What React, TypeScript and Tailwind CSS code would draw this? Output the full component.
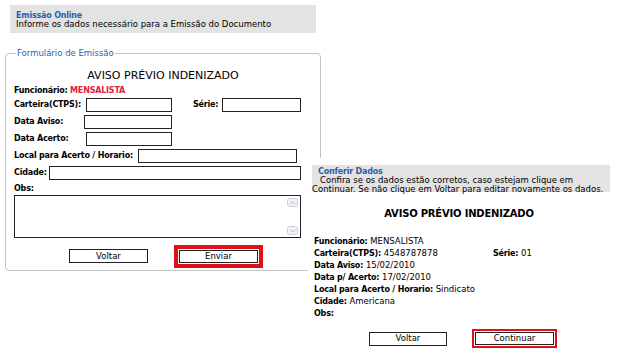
import React from 'react';

const font = 'font-["DejaVu_Sans",Verdana,sans-serif]';
const bold = 'font-bold text-[8px] tracking-[-0.2px] whitespace-nowrap';

const Input = ({ w }: { w: string }) => (
  <span className={`block h-[14px] ${w} border border-[#222] bg-white`} />
);

const Btn = ({ label, w, h }: { label: string; w: string; h: string }) => (
  <button className={`flex ${w} ${h} items-center justify-center border border-[#222] bg-white text-[8.5px] leading-none text-black`}>
    {label}
  </button>
);

const FormRow = ({ label, labelW, input }: { label: string; labelW: string; input: string }) => (
  <div className="flex h-[17px] items-center">
    <span className={`${labelW} shrink-0 ${bold}`}>{label}</span>
    <Input w={input} />
  </div>
);

const Emissao = () => (
  <div className="w-[330px]">
    <div className="ml-[10px] mt-[5px] h-[28px] w-[306px] bg-[#e3e3e3] px-[6px] pt-[6px] leading-[9px]">
      <div className="text-[8px] font-bold tracking-[-0.2px] text-[#2a5fae]">Emissão Online</div>
      <div className="text-[8.5px] text-black">Informe os dados necessário para a Emissão do Documento</div>
    </div>
    <fieldset className="ml-[5px] mt-[14px] h-[224px] w-[316px] rounded-[4px] border border-[#c4c4c4] pl-[8px] pr-[18px]">
      <legend className="ml-[2px] px-[1px] text-[8.5px] text-[#2a5fae]">Formulário de Emissão</legend>
      <div className="mt-[9px] pl-[10px] text-center text-[11px] leading-[14px]">AVISO PRÉVIO INDENIZADO</div>
      <div className={`mt-[1px] h-[13px] leading-[13px] ${bold}`}>
        Funcionário: <span className="text-[#e3203b]">MENSALISTA</span>
      </div>
      <div className="flex h-[17px] items-center">
        <span className={`w-[72px] shrink-0 ${bold}`}>Carteira(CTPS):</span>
        <Input w="w-[86px]" />
        <span className={`ml-[21px] w-[29px] shrink-0 ${bold}`}>Série:</span>
        <Input w="w-[79px]" />
      </div>
      <FormRow label="Data Aviso:" labelW="w-[70px]" input="w-[88px]" />
      <FormRow label="Data Acerto:" labelW="w-[72px]" input="w-[86px]" />
      <FormRow label="Local para Acerto / Horario:" labelW="w-[124px]" input="w-[159px]" />
      <FormRow label="Cidade:" labelW="w-[35px]" input="w-[252px]" />
      <div className={`h-[13px] leading-[13px] ${bold}`}>Obs:</div>
      <div className="flex h-[43px] w-[287px] border border-[#222] bg-white">
        <div className="flex-1" />
        <div className="flex w-[13px] flex-col justify-between py-[2px]">
          <svg width="11" height="9" viewBox="0 0 11 9">
            <rect x="0.5" y="0.5" width="10" height="8" rx="2" fill="#f0f3f8" stroke="#c8d0dc" />
            <path d="M3 6 L5.5 3.5 L8 6" fill="none" stroke="#b0b8c4" />
          </svg>
          <svg width="11" height="9" viewBox="0 0 11 9">
            <rect x="0.5" y="0.5" width="10" height="8" rx="2" fill="#f0f3f8" stroke="#c8d0dc" />
            <path d="M3 3.5 L5.5 6 L8 3.5" fill="none" stroke="#b0b8c4" />
          </svg>
        </div>
      </div>
      <div className="mt-[7px] flex items-center">
        <Btn label="Voltar" w="ml-[55px] w-[79px]" h="h-[14px]" />
        <div className="ml-[26px] flex border-[4px] border-[#e0101a] p-[1px]">
          <Btn label="Enviar" w="w-[79px]" h="h-[13px]" />
        </div>
      </div>
    </fieldset>
  </div>
);

const InfoRow = ({ label, value }: { label: string; value?: string }) => (
  <div className="h-[12px] whitespace-nowrap text-[8.5px] leading-[12px]">
    <span className={bold}>{label}</span> {value}
  </div>
);

const Conferir = () => (
  <div className="absolute left-[308px] top-[158px] h-[203px] w-[324px] bg-white">
    <div className="ml-[4px] mt-[7px] h-[27px] w-[298px] bg-[#e3e3e3] pt-[2px] text-[8.5px] leading-[9px]">
      <div className="pl-[6px] text-[8px] font-bold tracking-[-0.2px] text-[#2a5fae]">Conferir Dados</div>
      <div className="pl-[8px]">Confira se os dados estão corretos, caso estejam clique em</div>
      <div className="whitespace-nowrap">Continuar. Se não clique em Voltar para editar novamente os dados.</div>
    </div>
    <div className="mt-[15px] pr-[22px] text-center text-[10px] font-bold leading-[14px] tracking-[-0.2px]">
      AVISO PRÉVIO INDENIZADO
    </div>
    <div className="ml-[6px] mt-[14px]">
      <InfoRow label="Funcionário:" value="MENSALISTA" />
      <div className="flex h-[12px] whitespace-nowrap text-[8.5px] leading-[12px]">
        <span className="w-[179px]">
          <span className={bold}>Carteira(CTPS):</span> 4548787878
        </span>
        <span>
          <span className={bold}>Série:</span> 01
        </span>
      </div>
      <InfoRow label="Data Aviso:" value=" 15/02/2010" />
      <InfoRow label="Data p/ Acerto:" value="17/02/2010" />
      <InfoRow label="Local para Acerto / Horario:" value="Sindicato" />
      <InfoRow label="Cidade:" value="Americana" />
      <InfoRow label="Obs:" />
    </div>
    <div className="mt-[10px] flex items-center">
      <Btn label="Voltar" w="ml-[61px] w-[78px]" h="h-[14px]" />
      <div className="ml-[25px] flex border-[2px] border-[#e0101a] p-[1px]">
        <Btn label="Continuar" w="w-[79px]" h="h-[13px]" />
      </div>
    </div>
  </div>
);

export default function App() {
  return (
    <div className={`relative h-[361px] w-[632px] overflow-hidden bg-white text-black ${font}`}>
      <Emissao />
      <Conferir />
    </div>
  );
}
